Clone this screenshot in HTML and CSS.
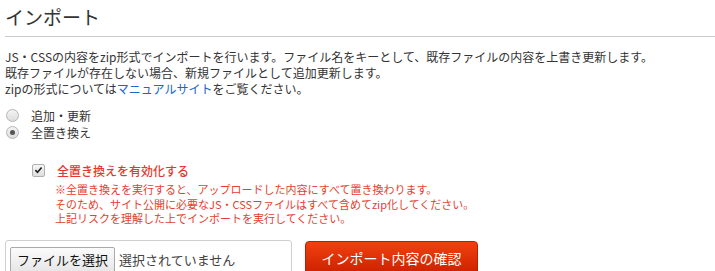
FILE: index.html
```html
<!DOCTYPE html>
<html lang="ja">
<head>
<meta charset="utf-8">
<title>インポート</title>
<link rel="stylesheet" href="styles.css">
</head>
<body>
<div class="page">
  <h1 class="title">インポート</h1>
  <div class="desc">
    <p>JS・CSSの内容をzip形式でインポートを行います。ファイル名をキーとして、既存ファイルの内容を上書き更新します。</p>
    <p>既存ファイルが存在しない場合、新規ファイルとして追加更新します。</p>
    <p>zipの形式については<a class="link" href="#">マニュアルサイト</a>をご覧ください。</p>
  </div>
  <div class="modes">
    <label class="mode"><span class="radio"></span><span>追加・更新</span></label>
    <label class="mode"><span class="radio checked"></span><span>全置き換え</span></label>
  </div>
  <div class="confirm">
    <label class="check-row"><span class="checkbox"><svg viewBox="0 0 12 12" width="12" height="12"><path d="M2.6 6.2 L4.9 8.6 L9.4 3.2" fill="none" stroke="#222" stroke-width="1.8"/></svg></span><span class="check-label">全置き換えを有効化する</span></label>
    <div class="warn">
      <p>※全置き換えを実行すると、アップロードした内容にすべて置き換わります。</p>
      <p>そのため、サイト公開に必要なJS・CSSファイルはすべて含めてzip化してください。</p>
      <p>上記リスクを理解した上でインポートを実行してください。</p>
    </div>
  </div>
  <div class="actions">
    <div class="file-box">
      <span class="file-btn">ファイルを選択</span>
      <span class="file-name">選択されていません</span>
    </div>
    <button class="submit">インポート内容の確認</button>
  </div>
</div>
</body>
</html>
```
FILE: styles.css
```css
html, body {
  margin: 0;
  padding: 0;
  background: #fff;
}
body {
  font-family: "Noto Sans CJK JP", "Noto Sans", sans-serif;
  color: #333;
  overflow: hidden;
}
.page {
  padding-left: 5px;
}
p {
  margin: 0;
}
.title {
  margin: 0;
  padding: 4px 0 6px;
  font-size: 19px;
  font-weight: normal;
  line-height: 26px;
  color: #333;
  border-bottom: 1px solid #cccccc;
}
.desc {
  margin-top: 12px;
  font-size: 12px;
  line-height: 16px;
}
.link {
  color: #2065c7;
  text-decoration: none;
}
.modes {
  margin-top: 10px;
  display: flex;
  flex-direction: column;
}
.mode {
  display: flex;
  align-items: center;
  height: 17px;
  font-size: 12px;
}
.radio {
  width: 11px;
  height: 11px;
  border-radius: 50%;
  border: 1px solid #b5b5b5;
  background: linear-gradient(#f4f4f4, #dcdcdc);
  margin: 0 12px 0 1px;
  display: flex;
  align-items: center;
  justify-content: center;
}
.radio.checked::after {
  content: "";
  width: 5px;
  height: 5px;
  border-radius: 50%;
  background: #555;
}
.confirm {
  margin-top: 21px;
  padding-left: 27px;
}
.check-row {
  display: flex;
  align-items: center;
  height: 16px;
}
.checkbox {
  width: 11px;
  height: 11px;
  border: 1px solid #b0b0b0;
  border-radius: 2px;
  background: linear-gradient(#f6f6f6, #dedede);
  display: flex;
  align-items: center;
  justify-content: center;
  margin-right: 12px;
}
.checkbox svg {
  display: block;
}
.check-label {
  font-size: 12px;
  font-weight: 500;
  color: #e3382c;
}
.warn {
  margin-top: 4px;
  padding-left: 23px;
  font-size: 11px;
  line-height: 14.5px;
  color: #e6402f;
}
.actions {
  margin-top: 14px;
  display: flex;
  align-items: flex-start;
  gap: 13px;
}
.file-box {
  width: 277px;
  border: 1px solid #cfcfcf;
  border-radius: 3px;
  padding: 4px;
  display: flex;
  align-items: center;
  height: 30px;
}
.file-btn {
  font-size: 13px;
  color: #111;
  border: 1px solid #a9a9a9;
  border-radius: 2px;
  background: linear-gradient(#fbfbfb, #e6e6e6);
  padding: 2px 6px;
  line-height: 20px;
}
.file-name {
  font-size: 13px;
  color: #444;
  margin-left: 4px;
}
.submit {
  width: 173px;
  height: 34px;
  margin-top: 1px;
  border: 1px solid #c21b00;
  border-radius: 4px;
  background: linear-gradient(#f0420f, #cc2000);
  color: #fff;
  font-family: "Noto Sans CJK JP", "Noto Sans", sans-serif;
  font-size: 14px;
  padding: 0;
  cursor: pointer;
}
```
